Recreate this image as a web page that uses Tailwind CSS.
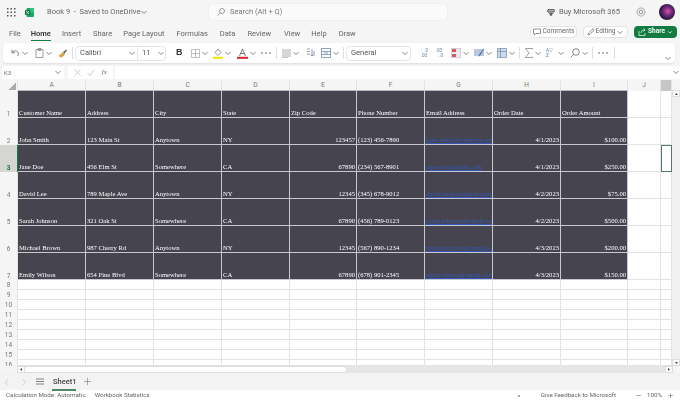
<!DOCTYPE html>
<html lang="en">
<head>
  <meta charset="UTF-8" />
  <title>Book 9 - Excel</title>
  <script src="https://cdn.jsdelivr.net/npm/@tailwindcss/browser@4"></script>
</head>
<body class="w-[680px] h-[401px] overflow-hidden bg-[#f5f5f5] font-['Roboto','Liberation_Sans',sans-serif] text-[#555] blur-[0.3px]">

  <svg class="hidden">
    <symbol id="chev" viewBox="0 0 8 8"><path d="M1.500 3l2.500 2.500L6.500 3" fill="none" stroke="#777" stroke-width="0.900"/></symbol>
  </svg>

  <!-- Title bar -->
  <div class="h-6 relative flex items-center text-[7.500px] text-[#666]">
    <svg class="ml-[7px] w-[9px] h-[9px]" viewBox="0 0 9 9" fill="#555">
      <rect x="0" y="0" width="1.500" height="1.500"/><rect x="3.500" y="0" width="1.500" height="1.500"/><rect x="7" y="0" width="1.500" height="1.500"/>
      <rect x="0" y="3.500" width="1.500" height="1.500"/><rect x="3.500" y="3.500" width="1.500" height="1.500"/><rect x="7" y="3.500" width="1.500" height="1.500"/>
      <rect x="0" y="7" width="1.500" height="1.500"/><rect x="3.500" y="7" width="1.500" height="1.500"/><rect x="7" y="7" width="1.500" height="1.500"/>
    </svg>
    <svg class="ml-[9px] w-[9px] h-[9px]" viewBox="0 0 9 9">
      <rect x="1.500" y="0" width="7.500" height="9" rx="1" fill="#21a366"/>
      <rect x="5" y="0" width="4" height="4.500" fill="#33c481"/>
      <rect x="0" y="2" width="5.500" height="5" rx="0.600" fill="#107c41"/>
      <path d="M1.300 3l2.800 3M4.100 3L1.300 6" stroke="#fff" stroke-width="0.700"/>
    </svg>
    <span class="ml-[13px]">Book 9 &nbsp;-&nbsp; Saved to OneDrive</span>
    <svg class="w-2 h-2"><use href="#chev"/></svg>
    <div class="absolute left-[209px] top-[4px] w-[238px] h-4 bg-[#fafafa] rounded-sm shadow-[0_0_1px_#ccc] flex items-center pl-2 text-[#777]">
      <svg class="w-2 h-2 mr-[5px]" viewBox="0 0 8 8" fill="none" stroke="#777" stroke-width="0.700"><circle cx="5" cy="3" r="2.500"/><path d="M3.200 4.800L.8 7.500"/></svg>
      Search (Alt + Q)
    </div>
    <div class="ml-auto flex items-center">
      <svg class="w-2 h-2 mr-[4px]" viewBox="0 0 8 8" fill="none" stroke="#444" stroke-width="0.800"><path d="M1 1.500h6L7.500 3 4 7.500.5 3zM.5 3h7M2.800 3L4 7.500 5.200 3"/></svg>
      <span>Buy Microsoft 365</span>
      <svg class="ml-4 w-2.5 h-2.5" viewBox="0 0 10 10" fill="none" stroke="#777" stroke-width="0.800"><circle cx="5" cy="5" r="1.800"/><circle cx="5" cy="5" r="4" stroke-dasharray="1.800 0.500"/></svg>
      <div class="ml-[13px] mr-[5px] w-[16px] h-[16px] rounded-full bg-[radial-gradient(circle_at_55%_45%,#e0509a_0%,#6c2a80_35%,#1a1025_75%)]"></div>
    </div>
  </div>

  <!-- Tabs -->
  <div class="h-[19px] flex items-center text-[7.500px] text-[#666] relative">
    <span class="ml-[9px]">File</span>
    <span class="ml-[10px] font-semibold text-[#333] relative">Home<span class="absolute left-0 right-0 top-[12px] h-[1px] bg-[#107c41]"></span></span>
    <span class="ml-[11px]">Insert</span>
    <span class="ml-[12px]">Share</span>
    <span class="ml-[11px]">Page Layout</span>
    <span class="ml-[12px]">Formulas</span>
    <span class="ml-[12px]">Data</span>
    <span class="ml-[12px]">Review</span>
    <span class="ml-[13px]">View</span>
    <span class="ml-[11px]">Help</span>
    <span class="ml-[12px]">Draw</span>
    <div class="absolute left-[530px] top-[2px] flex items-center gap-[6px] text-[6.500px]">
      <div class="w-[47px] h-3 bg-white border border-[#e4e4e4] rounded-sm flex items-center justify-center gap-[2px]">
        <svg class="w-2 h-2" viewBox="0 0 8 8" fill="none" stroke="#666" stroke-width="0.700"><path d="M.5 1h7v4.500H3L1.500 7V5.500h-1z"/></svg>Comments
      </div>
      <div class="w-[45px] h-3 bg-white border border-[#e4e4e4] rounded-sm flex items-center justify-center gap-[1px]">
        <svg class="w-2 h-2" viewBox="0 0 8 8" fill="none" stroke="#666" stroke-width="0.700"><path d="M1 7l.5-2L6 .8 7.200 2 2.800 6.500z"/></svg>Editing<svg class="w-2 h-2"><use href="#chev"/></svg>
      </div>
      <div class="w-[43px] h-3 bg-[#107c41] rounded-sm text-white font-semibold flex items-center justify-center gap-[2px]">
        <svg class="w-2 h-2" viewBox="0 0 8 8" fill="none" stroke="#fff" stroke-width="0.700"><path d="M1 3v4.500h6V5M3 5c0-2 1.500-3 3.500-3M5.500.5l1.500 1.500-1.500 1.500"/></svg>Share
        <svg class="w-1.5 h-1.5" viewBox="0 0 8 8"><path d="M1.500 3l2.500 2.500L6.500 3" fill="none" stroke="#fff"/></svg>
      </div>
    </div>
  </div>

  <!-- Ribbon -->
  <div class="ml-[3px] w-[672px] h-[20px] bg-white rounded-sm shadow-[0_1px_2px_#ddd] relative flex items-center text-[7.500px] text-[#555]">
    <svg class="ml-[8px] w-[9px] h-[9px]" viewBox="0 0 9 9" fill="none" stroke="#666" stroke-width="0.800"><path d="M1 .8v3h3M1 3.800C2 2 4 1.500 5.500 2c2 .8 2.500 3.200 1.200 5"/></svg>
    <svg class="ml-[1px] w-2 h-2"><use href="#chev"/></svg>
    <svg class="ml-[6px] w-[9px] h-[10px]" viewBox="0 0 9 10" fill="none" stroke="#777" stroke-width="0.700"><path d="M1 1.500h7v8H1zM3 .5h3v2H3z"/></svg>
    <svg class="ml-[1px] w-2 h-2"><use href="#chev"/></svg>
    <svg class="ml-[5px] w-[10px] h-[9px]" viewBox="0 0 10 9"><path d="M1 6c2-.5 3-2 3.500-3L7 4.500C6.500 6.500 5 8 3 8.500 2 8.500 1 7.500 1 6z" fill="#d9a441"/><path d="M5 3l3.500-2.500.8.8L6.500 4.500z" fill="#666"/></svg>
    <div class="ml-[4px] w-px h-3 bg-[#ddd]"></div>
    <!-- font family + size -->
    <div class="ml-[2px] w-[91px] h-[15px] border border-[#e6e6e6] rounded-sm flex items-center">
      <span class="w-[52px] pl-[4px]">Calibri</span>
      <svg class="w-2 h-2"><use href="#chev"/></svg>
      <div class="w-px h-full bg-[#e6e6e6] ml-[1px]"></div>
      <span class="ml-[4px] w-[15px]">11</span>
      <svg class="w-2 h-2"><use href="#chev"/></svg>
    </div>
    <span class="ml-[10px] w-[6px] font-bold text-[9px] text-[#333] font-['Liberation_Sans',sans-serif]">B</span>
    <svg class="ml-[9px] w-[9px] h-[9px]" viewBox="0 0 9 9" fill="none" stroke="#999" stroke-width="0.600"><path d="M.5.5h8v8h-8zM4.500.5v8M.5 4.500h8"/></svg>
    <svg class="ml-[1px] w-2 h-2"><use href="#chev"/></svg>
    <svg class="ml-[4px] w-[10px] h-[11px]" viewBox="0 0 10 11"><path d="M5 1l3 3.500-3 3-3-3z" fill="none" stroke="#666" stroke-width="0.700"/><rect x="0" y="8.800" width="10" height="2" fill="#f2e600"/></svg>
    <svg class="ml-[1px] w-2 h-2"><use href="#chev"/></svg>
    <svg class="ml-[5px] w-[11px] h-[11px]" viewBox="0 0 11 11"><path d="M2.500 8l3-7 3 7M3.700 5.500h3.600" fill="none" stroke="#555" stroke-width="0.800"/><rect x="0" y="8.800" width="11" height="2" fill="#d8232a"/></svg>
    <svg class="ml-[1px] w-2 h-2"><use href="#chev"/></svg>
    <svg class="ml-[4px] w-[10px] h-[2px]" viewBox="0 0 10 2" fill="#555"><circle cx="1" cy="1" r="0.800"/><circle cx="5" cy="1" r="0.800"/><circle cx="9" cy="1" r="0.800"/></svg>
    <div class="ml-[5px] w-px h-3 bg-[#ddd]"></div>
    <svg class="ml-[5px] w-[9px] h-[9px]" viewBox="0 0 9 9" stroke="#777" stroke-width="0.600"><path d="M0 1h9M0 3h9M0 5h9M0 7h9M0 8.800h6"/></svg>
    <svg class="ml-[1px] w-2 h-2"><use href="#chev"/></svg>
    <svg class="ml-[6px] w-[10px] h-[10px]" viewBox="0 0 10 10" fill="none" stroke="#678" stroke-width="0.700"><path d="M1 1h3M1 3.500h3M1 6h3M6 1v7M6 8L4.500 6.500M6 8l1.500-1.500M8 3v5"/></svg>
    <svg class="ml-[5px] w-[10px] h-[10px]" viewBox="0 0 10 10" fill="none" stroke="#5a7ea8" stroke-width="0.700"><path d="M.5.5h9v9h-9zM.5 3.500h9M.5 6.500h9M3 5h4"/></svg>
    <svg class="ml-[1px] w-2 h-2"><use href="#chev"/></svg>
    <div class="ml-[3px] w-px h-3 bg-[#ddd]"></div>
    <div class="ml-[2px] w-[65px] h-[15px] border border-[#e6e6e6] rounded-sm flex items-center justify-between pl-[4px] pr-[1px]">
      <span>General</span><svg class="w-2 h-2"><use href="#chev"/></svg>
    </div>
    <div class="ml-[8px] w-[10px] text-[4.500px] leading-[5px] text-[#5a7ea8] text-center">←.0<br>.00</div>
    <div class="ml-[5px] w-[10px] text-[4.500px] leading-[5px] text-[#5a7ea8] text-center">.00<br>→.0</div>
    <svg class="ml-[7px] w-[10px] h-[10px]" viewBox="0 0 10 10"><rect width="10" height="10" fill="#e8e8ee" stroke="#999" stroke-width="0.500"/><rect x="1" y="1" width="4" height="3" fill="#d65a5a"/><rect x="1" y="6" width="4" height="3" fill="#d65a5a"/></svg>
    <svg class="ml-[1px] w-2 h-2"><use href="#chev"/></svg>
    <svg class="ml-[4px] w-[10px] h-[10px]" viewBox="0 0 10 10"><rect y="1" width="10" height="7" fill="#b9c8e0"/><path d="M4 9l1.500-3L9.500.5l.5.5L6.500 7z" fill="#4a6fa8"/></svg>
    <svg class="ml-[1px] w-2 h-2"><use href="#chev"/></svg>
    <svg class="ml-[4px] w-[10px] h-[10px]" viewBox="0 0 10 10" fill="#cfd9ea" stroke="#5a7ea8" stroke-width="0.600"><path d="M.5.5h9v9h-9zM.5 3.500h9M3.500.5v9"/></svg>
    <svg class="ml-[1px] w-2 h-2"><use href="#chev"/></svg>
    <div class="ml-[3px] w-px h-3 bg-[#ddd]"></div>
    <svg class="ml-[5px] w-[8px] h-[10px]" viewBox="0 0 8 10" fill="none" stroke="#777" stroke-width="0.700"><path d="M7.500 1.500V.5H.5L4 5 .5 9.500h7v-1"/></svg>
    <svg class="ml-[1px] w-2 h-2"><use href="#chev"/></svg>
    <div class="ml-[4px] w-[10px] text-[4.500px] leading-[5px] text-[#5a7ea8]">A▽<br>Z</div>
    <svg class="ml-[1px] w-2 h-2"><use href="#chev"/></svg>
    <svg class="ml-[5px] w-[10px] h-[10px]" viewBox="0 0 10 10" fill="none" stroke="#666" stroke-width="0.800"><circle cx="6" cy="4" r="3.300"/><path d="M3.600 6.400L.8 9.300"/></svg>
    <svg class="ml-[1px] w-2 h-2"><use href="#chev"/></svg>
    <div class="ml-[3px] w-px h-3 bg-[#ddd]"></div>
    <svg class="ml-[5px] w-[10px] h-[2px]" viewBox="0 0 10 2" fill="#555"><circle cx="1" cy="1" r="0.800"/><circle cx="5" cy="1" r="0.800"/><circle cx="9" cy="1" r="0.800"/></svg>
    <div class="ml-[6px] w-px h-3 bg-[#ddd]"></div>
    <svg class="absolute right-[3px] bottom-[1px] w-2 h-2"><use href="#chev"/></svg>
  </div>

  <!-- Formula bar -->
  <div class="h-[17px] flex items-center pt-[1px] text-[6px] text-[#666]">
    <div class="ml-[2px] w-[62px] h-[13px] bg-white flex items-center justify-between px-[2px]">
      <span>K3</span><svg class="w-2 h-2"><use href="#chev"/></svg>
    </div>
    <div class="ml-[4px] w-[45px] h-[13px] bg-white flex items-center justify-around px-[3px]">
      <svg class="w-[7px] h-[7px]" viewBox="0 0 7 7" stroke="#bbb" stroke-width="0.700"><path d="M.5.5l6 6M6.500.5l-6 6"/></svg>
      <svg class="w-[8px] h-[7px]" viewBox="0 0 8 7" fill="none" stroke="#bbb" stroke-width="0.700"><path d="M.5 4l2.500 2.500L7.500.5"/></svg>
      <span class="italic text-[7px] font-['Liberation_Serif',serif]">fx</span>
    </div>
    <div class="ml-[2px] w-[565px] h-[13px] bg-white flex items-center justify-end">
      <svg class="w-2 h-2"><use href="#chev"/></svg>
    </div>
  </div>

  <!-- Sheet -->
  <div class="h-[286px] flex bg-white">
    <div id="sheet" class="w-[672px] grid grid-cols-[18px_68px_68px_68px_68px_67px_68px_68px_68px_67px_33px_11px] grid-rows-[11px_27px_27px_27px_27px_27px_27px_27px_10px_10px_10px_10px_10px_10px_10px_10px_6px] overflow-hidden font-['Liberation_Serif',serif] text-[6.600px]"></div>
    <!-- vertical scrollbar -->
    <div class="w-2 bg-[#f0f0f0] flex flex-col items-center">
      <div class="h-[10px] w-full bg-[#f5f5f5]"></div>
      <div class="h-[7px] w-full bg-white border border-[#ddd] flex items-center justify-center">
        <svg class="w-[3px] h-[2px]" viewBox="0 0 3 2" fill="#444"><path d="M1.500 0L3 2H0z"/></svg>
      </div>
      <div class="flex-1"></div>
      <div class="h-[7px] w-full bg-white border border-[#ddd] flex items-center justify-center">
        <svg class="w-[3px] h-[2px]" viewBox="0 0 3 2" fill="#444"><path d="M1.500 2L3 0H0z"/></svg>
      </div>
    </div>
  </div>

  <!-- Horizontal scrollbar -->
  <div class="h-[7px] flex bg-[#e6e6e6]">
    <div class="w-[17px] bg-[#f5f5f5]"></div>
    <div class="w-[8px] bg-white border border-[#ddd] flex items-center justify-center">
      <svg class="w-[2px] h-[3px]" viewBox="0 0 2 3" fill="#444"><path d="M0 1.500L2 0v3z"/></svg>
    </div>
    <div class="w-[322px] bg-white rounded-r-sm border border-l-0 border-[#ddd]"></div>
    <div class="w-[318px]"></div>
    <div class="w-[8px] bg-white border border-[#ddd] flex items-center justify-center">
      <svg class="w-[2px] h-[3px]" viewBox="0 0 2 3" fill="#444"><path d="M2 1.500L0 0v3z"/></svg>
    </div>
    <div class="flex-1 bg-[#f5f5f5]"></div>
  </div>

  <!-- Sheet tabs -->
  <div class="h-[17px] flex items-center text-[7.500px] bg-[#f3f3f3]">
    <svg class="ml-[4px] w-[6px] h-2" viewBox="0 0 6 8" fill="none" stroke="#ccc" stroke-width="0.800"><path d="M4 1L1.500 4 4 7"/></svg>
    <svg class="ml-[11px] w-[6px] h-2" viewBox="0 0 6 8" fill="none" stroke="#ccc" stroke-width="0.800"><path d="M2 1l2.500 3L2 7"/></svg>
    <svg class="ml-[9px] w-[8px] h-[7px]" viewBox="0 0 8 7" stroke="#666" stroke-width="0.800"><path d="M0 1h8M0 3.500h8M0 6h8"/></svg>
    <span class="ml-[9px] w-[22px] font-medium text-[#444] relative">Sheet1<span class="absolute -left-[1px] -right-[1px] top-[13px] h-[2px] bg-[#4a8a6a]"></span></span>
    <svg class="ml-[9px] w-[7px] h-[7px]" viewBox="0 0 7 7" stroke="#888" stroke-width="0.700"><path d="M3.500 0v7M0 3.500h7"/></svg>
  </div>

  <!-- Status bar -->
  <div class="h-[11px] bg-white flex items-center text-[6.200px] text-[#666]">
    <span class="ml-[6px]">Calculation Mode: Automatic</span>
    <span class="ml-[9px]">Workbook Statistics</span>
    <div class="ml-auto w-[2px] h-[2px] bg-[#888] rounded-full"></div>
    <span class="ml-[21px]">Give Feedback to Microsoft</span>
    <svg class="ml-[20px] w-[5px] h-[5px]" viewBox="0 0 5 5" stroke="#777" stroke-width="0.600"><path d="M0 2.500h5"/></svg>
    <span class="ml-[6px]">100%</span>
    <svg class="ml-[6px] mr-[7px] w-[5px] h-[5px]" viewBox="0 0 5 5" stroke="#777" stroke-width="0.600"><path d="M2.500 0v5M0 2.500h5"/></svg>
  </div>

  <script>
    const cols = ['A', 'B', 'C', 'D', 'E', 'F', 'G', 'H', 'I', 'J', ''];
    const rows = [
      ['Customer Name', 'Address', 'City', 'State', 'Zip Code', 'Phone Number', 'Email Address', 'Order Date', 'Order Amount'],
      ['John Smith', '123 Main St', 'Anytown', 'NY', '123457', '(123) 456-7890', 'john.smith@example.com', '4/1/2023', '$100.00'],
      ['Jane Doe', '456 Elm St', 'Somewhere', 'CA', '67890', '(234) 567-8901', 'jane.doe@email.com', '4/1/2023', '$250.00'],
      ['David Lee', '789 Maple Ave', 'Anytown', 'NY', '12345', '(345) 678-9012', 'david.lee@example.com', '4/2/2023', '$75.00'],
      ['Sarah Johnson', '321 Oak St', 'Somewhere', 'CA', '67890', '(456) 789-0123', 'sarah.johnson@email.com', '4/2/2023', '$500.00'],
      ['Michael Brown', '987 Cherry Rd', 'Anytown', 'NY', '12345', '(567) 890-1234', 'michael.brown@email.com', '4/3/2023', '$200.00'],
      ['Emily Wilson', '654 Pine Blvd', 'Somewhere', 'CA', '67890', '(678) 901-2345', 'emily.wilson@email.com', '4/3/2023', '$150.00']
    ];

    // corner cell with the little select-all triangle
    let html = '<div class="relative bg-[#f5f5f5] border-r border-[#e4e4e4]"><div class="absolute right-[1px] bottom-[1px] w-[7px] h-[7px] bg-[linear-gradient(135deg,transparent_50%,#aaa_50%)]"></div></div>';
    cols.forEach((c, i) => {
      const headBg = i === 10 ? 'bg-[#c6c6c6]' : 'bg-[#f5f5f5]';
      const headBorder = i < 9 ? 'border-b border-[#b8b8c4]' : '';
      html += `<div class="${headBg} ${headBorder} border-r border-r-[#e4e4e4] text-center text-[6.500px] leading-[10px] text-[#777] font-['Roboto',sans-serif]">${c}</div>`;
    });

    for (let r = 1; r <= 16; r++) {
      const active = r === 3;
      const headStyle = active ? 'bg-[#d5d5d2] text-[#107c41] font-bold border-r border-[#107c41]' : 'bg-[#f5f5f5] text-[#777] border-r border-[#e4e4e4]';
      const headAlign = r >= 8 ? 'items-start leading-[10px]' : 'items-end leading-[8px]';
      html += `<div class="${headStyle} ${headAlign} flex justify-center overflow-hidden text-[6.500px] font-['Roboto',sans-serif]">${r}</div>`;
      for (let c = 0; c < 11; c++) {
        const data = rows[r - 1];
        if (data && c < 9) {
          const numeric = r > 1 && (c === 4 || c === 7 || c === 8);
          const link = r > 1 && c === 6;
          const tone = link ? 'text-[#3558b8] underline' : 'text-white';
          html += `<div class="bg-[#45444f] border-r border-b border-[#c8c8d0] flex items-end overflow-hidden whitespace-nowrap leading-[7px] pb-[1px] px-[1px] ${numeric ? 'justify-end' : ''} ${tone}">${data[c]}</div>`;
        } else if (r === 3 && c === 10) {
          html += '<div class="border border-[#55796a]"></div>';
        } else {
          html += '<div class="border-r border-b border-[#e3e3e3]"></div>';
        }
      }
    }
    document.getElementById('sheet').innerHTML = html;
  </script>
</body>
</html>
